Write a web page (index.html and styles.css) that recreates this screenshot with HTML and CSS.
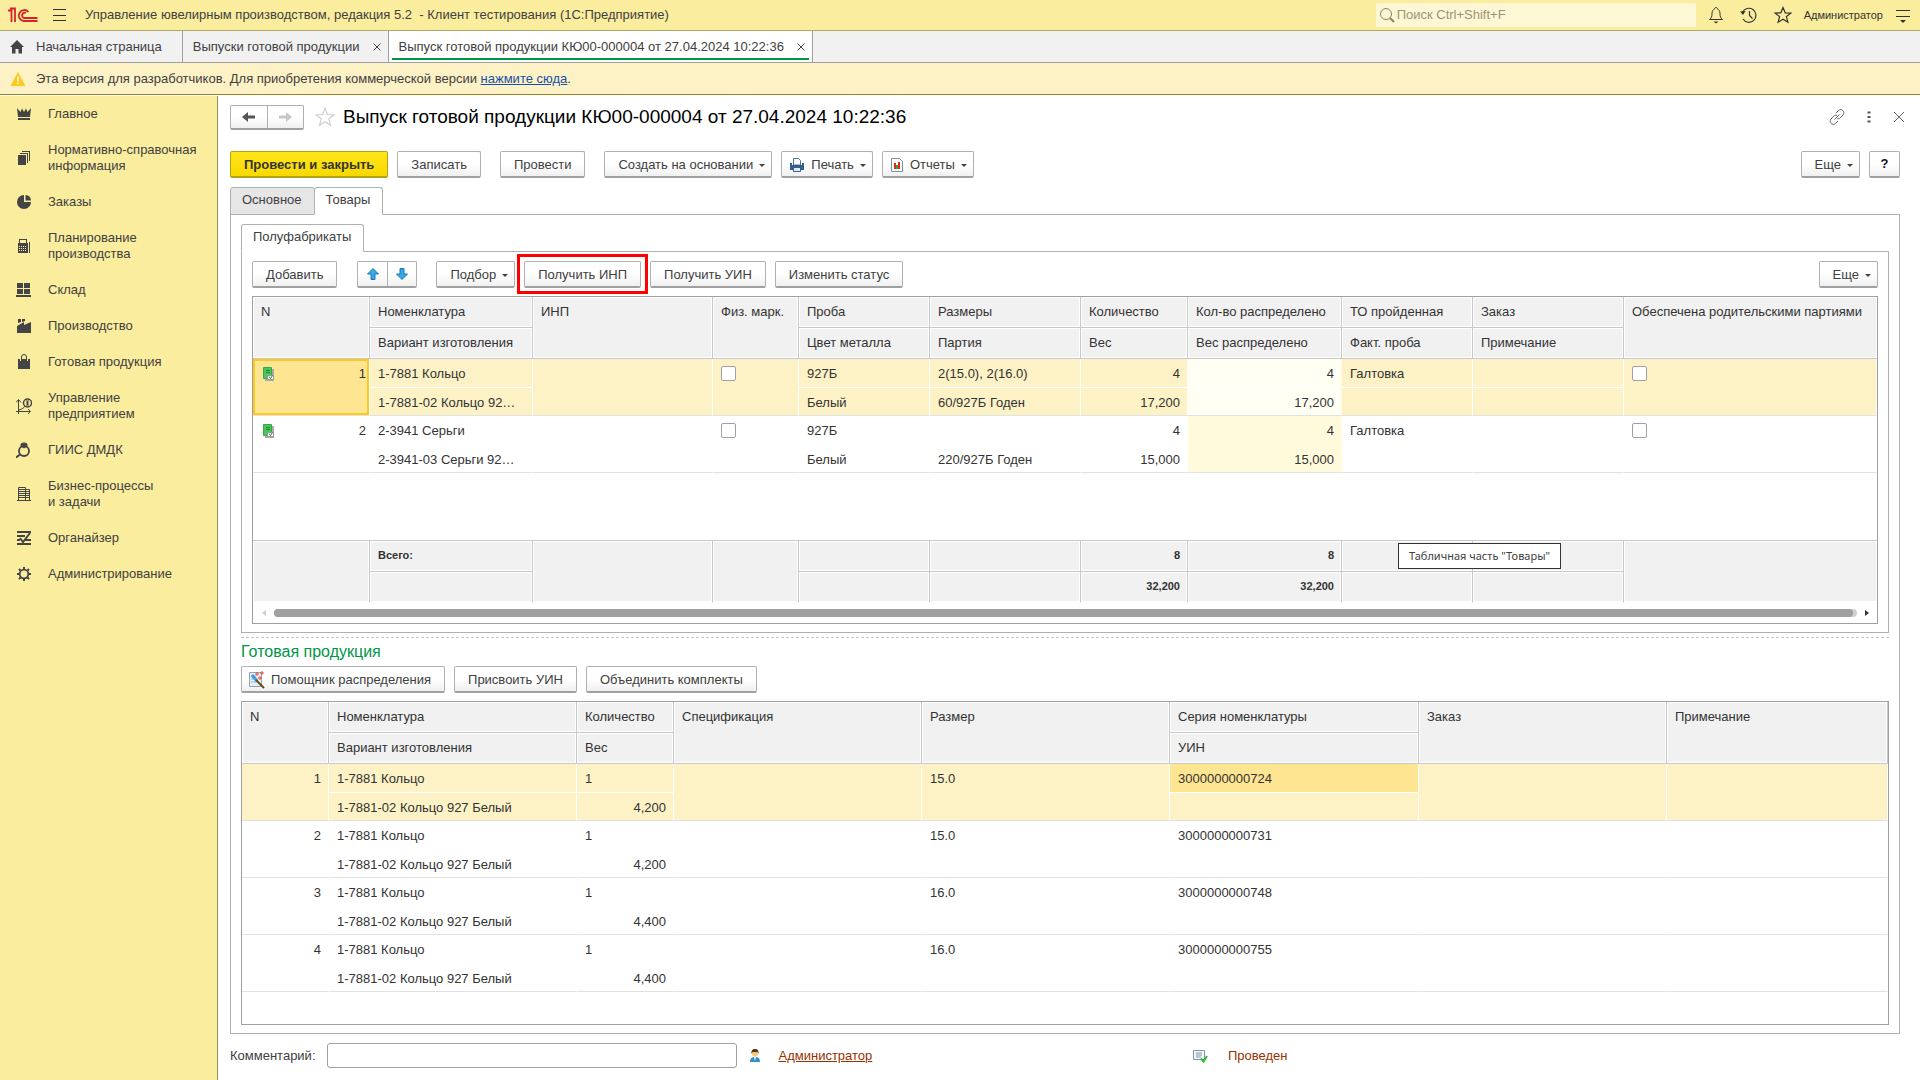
FILE: index.html
```html
<!DOCTYPE html>
<html lang="ru">
<head>
<meta charset="utf-8">
<title>Управление ювелирным производством</title>
<link rel="stylesheet" href="styles.css">
</head>
<body>
<header class="topbar">
  <a class="logo" href="#" aria-label="1С"><svg width="30" height="18" viewBox="0 0 30 18" fill="none" stroke="#d8232a" stroke-width="1.800"><path d="M0 4.500h3.500V16M2 2.500h5V16"/><path d="M20.500 6a5.500 5.500 0 1 0-4.500 9H29.500"/><path d="M18 7a2.700 2.700 0 1 0-2 5H29.500"/></svg></a>
  <button class="ghost" aria-label="Меню"><svg width="16" height="16" viewBox="0 0 16 16" stroke="#333" fill="none"><path d="M1 2.500h13M1 8.500h13M1 13.500h13"/></svg></button>
  <h1 class="app-title">Управление ювелирным производством, редакция 5.2&nbsp; - Клиент тестирования (1С:Предприятие)</h1>
  <label class="search">
    <svg width="16" height="16" viewBox="0 0 16 16" fill="none" stroke="#8d865c"><circle cx="7" cy="7" r="5.500"/><path d="M11 11l4 4" stroke-width="2"/></svg>
    <input type="text" aria-label="Поиск" placeholder="Поиск Ctrl+Shift+F">
  </label>
  <nav class="top-tools">
    <button class="ghost" aria-label="Уведомления"><svg width="16" height="18" viewBox="0 0 16 18" fill="none" stroke="#333"><path d="M1.500 13.500h13c-2-1.500-2.500-3-2.500-6 0-3-1.500-4-2.500-4.500C9.500 1 6.500 1 6.500 3 5.500 3.500 4 4.500 4 7.500c0 3-.5 4.500-2.500 6z"/><path d="M5.500 15.500h5l-2.500 2z" fill="#333" stroke="none"/></svg></button>
    <button class="ghost" aria-label="История"><svg width="18" height="18" viewBox="0 0 18 18" fill="none" stroke="#333" stroke-width="1.200"><path d="M2.500 6.500A7 7 0 1 1 3 13"/><path d="M9.500 5v4.500l3 3"/><path d="M0 5.500l5.500-.5-2.500 4z" fill="#333" stroke="none"/></svg></button>
    <button class="ghost" aria-label="Избранное"><svg width="18" height="18" viewBox="0 0 18 18" fill="none" stroke="#333" stroke-width="1.200"><path d="M9 1.500l2.200 5.300 5.600.3-4.400 3.500 1.500 5.700L9 13.200l-4.900 3.100 1.500-5.700L1.200 7.100l5.600-.3z"/></svg></button>
    <a class="user" href="#">Администратор</a>
    <button class="ghost" aria-label="Настройки"><svg width="16" height="16" viewBox="0 0 16 16" stroke="#333" fill="none"><path d="M1 3.500h14M1 9.500h14"/><path d="M5 13h6l-3 3z" fill="#333" stroke="none"/></svg></button>
  </nav>
</header>

<nav class="windows">
  <a class="window home" href="#"><svg width="14" height="14" viewBox="0 0 14 14" fill="#444"><path d="M7 0l7 7h-2v6.500H8.500V9h-3v4.500H2V7H0z"/></svg>Начальная страница</a>
  <a class="window" href="#">Выпуски готовой продукции<svg width="8" height="8" viewBox="0 0 8 8" stroke="#444"><path d="M.5.5l7 7M7.500.5l-7 7"/></svg></a>
  <a class="window active" href="#">Выпуск готовой продукции КЮ00-000004 от 27.04.2024 10:22:36<svg width="8" height="8" viewBox="0 0 8 8" stroke="#444"><path d="M.5.5l7 7M7.500.5l-7 7"/></svg></a>
</nav>

<div class="notice">
  <svg width="16" height="14" viewBox="0 0 16 14"><path d="M8 0l7.500 14H.5z" fill="#fbc91f"/><path d="M7.300 4.500h1.400v5H7.300zM7.300 10.800h1.400v1.500H7.300z" fill="#fff"/></svg>
  <p>Эта версия для разработчиков. Для приобретения коммерческой версии <a href="#">нажмите сюда</a>.</p>
</div>

<div class="workspace">
  <nav class="sidebar">
    <a href="#"><svg width="16" height="16" viewBox="0 0 16 16" fill="#444"><path d="M1 2l3.500 4L6 2.500 8 6l2-3.500L11.500 6 15 2l-1 9H2zM2 12h12v2H2z"/></svg>Главное</a>
    <a href="#"><svg width="16" height="16" viewBox="0 0 16 16" fill="#444"><path d="M2 5h8v10H2zM4 3h8v10h-1V4H4zM6 1h8v10h-1V2H6z"/></svg>Нормативно-справочная информация</a>
    <a href="#"><svg width="16" height="16" viewBox="0 0 16 16" fill="#444"><path d="M8 1v7h7A7 7 0 1 1 8 1z"/><path d="M9.500 1A6 6 0 0 1 15 6.500H9.500z"/></svg>Заказы</a>
    <a href="#"><svg width="16" height="16" viewBox="0 0 16 16" fill="#444"><path d="M3 1h8v4h1v10H2V5h1zM4 2v3h6V2zM13 4h1v11h-1z" fill-rule="evenodd"/><path d="M3 8.500h8M3 10.500h8M3 12.500h8" stroke="#fbed9e" stroke-dasharray="1 1"/></svg>Планирование производства</a>
    <a href="#"><svg width="16" height="16" viewBox="0 0 16 16" fill="#444"><path d="M1 1h6v5H1zM8 1h6v5H8zM1 7h6v5H1zM8 7h6v5H8zM0 13h15v2H0z"/></svg>Склад</a>
    <a href="#"><svg width="16" height="16" viewBox="0 0 16 16" fill="#444"><path d="M2 1h3v3L2 5zM6 1h3v2L6 4zM1 8l7-4v3l7-3v11H1z"/></svg>Производство</a>
    <a href="#"><svg width="16" height="16" viewBox="0 0 16 16" fill="#444"><path d="M2 5h12v10H2z"/><path d="M5.500 7V3a2.500 2.500 0 0 1 5 0v4" fill="none" stroke="#444"/><path d="M4.500 7V5M11.500 7V5" stroke="#fbed9e"/></svg>Готовая продукция</a>
    <a href="#"><svg width="16" height="16" viewBox="0 0 16 16" fill="none" stroke="#444"><path d="M2.500 2v14M0 13.500h14M0 4.500l2.500-3 2.500 3M12 11l2.500 2.500L12 16M3 12c3-1 5-2 6-4" /><circle cx="11.500" cy="5" r="4" stroke-width="1.500"/><path d="M10 3h3M10 5h3M10 7h3M11.500 3v4"/></svg>Управление предприятием</a>
    <a href="#"><svg width="16" height="16" viewBox="0 0 16 16" fill="none" stroke="#444"><circle cx="8" cy="9" r="5" stroke-width="1.800"/><path d="M5 2l2-1h2l2 1v2L8 6 5 4z" fill="#444"/><path d="M0 15.500l4-3" stroke-width="2"/></svg>ГИИС ДМДК</a>
    <a href="#"><svg width="16" height="16" viewBox="0 0 16 16" fill="none" stroke="#444"><path d="M2.500 15V1.500h7V15M9.500 3.500h4V15M1 14.500h14M3 3.500h6M3 5.500h10M3 7.500h10M3 9.500h10M3 11.500h10"/></svg>Бизнес-процессы<br>и задачи</a>
    <a href="#"><svg width="16" height="16" viewBox="0 0 16 16" fill="none" stroke="#444" stroke-width="2"><path d="M1 2h14M1 6h8M1 10h3M9 10h6M1 14h14"/><path d="M4 8l3 4 7-9"/></svg>Органайзер</a>
    <a href="#"><svg width="16" height="16" viewBox="0 0 16 16" fill="none" stroke="#444"><circle cx="8" cy="8" r="4.300" stroke-width="1.800"/><path d="M8 1v2M8 13v2M1 8h2M13 8h2M3 3l1.500 1.500M11.500 11.500L13 13M13 3l-1.500 1.500M4.500 11.500L3 13" stroke-width="2"/></svg>Администрирование</a>
  </nav>

  <main class="form">
    <div class="form-head">
      <div class="pair nav-pair">
        <button aria-label="Назад"><svg width="14" height="12" viewBox="0 0 14 12" fill="#555"><path d="M0 6l6-5v3.500h7v3H6V11z"/></svg></button>
        <button aria-label="Вперед"><svg width="14" height="12" viewBox="0 0 14 12" fill="#c8c8c8"><path d="M14 6L8 1v3.500H1v3h7V11z"/></svg></button>
      </div>
      <button class="ghost" aria-label="В избранное"><svg width="20" height="20" viewBox="0 0 18 18" fill="none" stroke="#ccc"><path d="M9 1l2.200 5.800 5.800.3-4.600 3.500 1.500 5.900L9 13.200l-4.900 3.300 1.500-5.900L1 7.100l5.800-.3z"/></svg></button>
      <h2 class="form-title">Выпуск готовой продукции КЮ00-000004 от 27.04.2024 10:22:36</h2>
      <div class="head-tools">
        <button class="ghost" aria-label="Ссылка"><svg width="16" height="16" viewBox="0 0 16 16" fill="none" stroke="#666"><path d="M7 4l2.500-2.500c3-2.500 7 1 4.500 4.500l-3 3c-1 1-2 1-3 .5M9 12l-2.500 2.500c-3 2.500-7-1-4.500-4.500l3-3c1-1 2-1 3-.5M5.500 10.500l5-5"/></svg></button>
        <button class="ghost" aria-label="Действия"><svg width="4" height="12" viewBox="0 0 4 12" fill="#555"><path d="M.5.500h3v2h-3zM.5 5h3v2h-3zM.5 9.500h3v2h-3z"/></svg></button>
        <button class="ghost" aria-label="Закрыть"><svg width="12" height="12" viewBox="0 0 12 12" stroke="#666"><path d="M1 1l10 10M11 1L1 11"/></svg></button>
      </div>
    </div>

    <div class="bar main-bar">
      <button class="btn primary">Провести и закрыть</button>
      <button class="btn">Записать</button>
      <button class="btn spaced">Провести</button>
      <button class="btn drop spaced">Создать на основании</button>
      <button class="btn drop with-icon"><svg width="16" height="16" viewBox="0 0 16 16"><path d="M4.500 1.500h5l2 2V8h-7z" fill="#fff" stroke="#4a7299"/><path d="M1 6h2v2h10V6h2v7H1z" fill="#35608a"/><path d="M4.500 10.500h7v4h-7z" fill="#dfeaf4" stroke="#35608a"/></svg>Печать</button>
      <button class="btn drop with-icon"><svg width="14" height="16" viewBox="0 0 14 16"><path d="M1.500 1.500h8l3 3v10h-11z" fill="#fff" stroke="#7d90a5"/><path d="M4 6h2v6H4z" fill="#e02a1c"/><path d="M6 8h2v4H6z" fill="#2ea836"/><path d="M8 5h2v7H8z" fill="#e02a1c"/></svg>Отчеты</button>
      <button class="btn drop push">Еще</button>
      <button class="btn help">?</button>
    </div>

    <div class="tabs"><button class="tab">Основное</button><button class="tab current">Товары</button></div>
    <section class="panel outer">
      <div class="tabs"><button class="tab current">Полуфабрикаты</button></div>
      <section class="panel inner">
        <div class="bar table-bar">
          <button class="btn">Добавить</button>
          <div class="pair move-pair">
            <button aria-label="Вверх"><svg width="12" height="12" viewBox="0 0 12 12"><path d="M6 .5l5.500 5.500H8v5.500H4V6H.5z" fill="#35a8e8" stroke="#1f78b0"/></svg></button>
            <button aria-label="Вниз"><svg width="12" height="12" viewBox="0 0 12 12"><path d="M6 11.500L.5 6H4V.5h4V6h3.500z" fill="#35a8e8" stroke="#1f78b0"/></svg></button>
          </div>
          <button class="btn drop spaced">Подбор</button>
          <button class="btn marked">Получить ИНП</button>
          <button class="btn">Получить УИН</button>
          <button class="btn">Изменить статус</button>
          <button class="btn drop push">Еще</button>
        </div>
        <div class="grid-box">
          <table class="grid goods">
            <colgroup><col class="w-n"><col class="w-name"><col class="w-inp"><col class="w-mark"><col class="w-a"><col class="w-b"><col class="w-qty"><col class="w-dist"><col class="w-a"><col class="w-b"><col></colgroup>
            <thead>
              <tr><th rowspan="2">N</th><th>Номенклатура</th><th rowspan="2">ИНП</th><th rowspan="2">Физ. марк.</th><th>Проба</th><th>Размеры</th><th>Количество</th><th>Кол-во распределено</th><th>ТО пройденная</th><th>Заказ</th><th rowspan="2">Обеспечена родительскими партиями</th></tr>
              <tr><th>Вариант изготовления</th><th>Цвет металла</th><th>Партия</th><th>Вес</th><th>Вес распределено</th><th>Факт. проба</th><th>Примечание</th></tr>
            </thead>
            <tbody class="record selected">
              <tr><td rowspan="2" class="focus"><div class="numbered"><svg width="14" height="16" viewBox="0 0 14 16"><path d="M3 3h9v12H3z" fill="#aaa"/><path d="M1.500 1.500h8v11h-8z" fill="#4cc35c" stroke="#37a948"/><path d="M4 4.500h4M4 6.500h4" stroke="#1f8a30"/><path d="M5.500 9.500h6v4h-6z" fill="#fff" stroke="#999"/><path d="M7 10.500l1.500 2 2-3" stroke="#1f8a30" fill="none"/></svg>1</div></td><td>1-7881 Кольцо</td><td rowspan="2"></td><td rowspan="2"><input type="checkbox" aria-label="Физ. марк., строка 1"></td><td>927Б</td><td>2(15.0), 2(16.0)</td><td class="num">4</td><td class="num dist">4</td><td>Галтовка</td><td></td><td rowspan="2"><input type="checkbox" aria-label="Обеспечена, строка 1"></td></tr>
              <tr><td>1-7881-02 Кольцо 92…</td><td>Белый</td><td>60/927Б Годен</td><td class="num">17,200</td><td class="num dist">17,200</td><td></td><td></td></tr>
            </tbody>
            <tbody class="record">
              <tr><td rowspan="2"><div class="numbered"><svg width="14" height="16" viewBox="0 0 14 16"><path d="M3 3h9v12H3z" fill="#aaa"/><path d="M1.500 1.500h8v11h-8z" fill="#4cc35c" stroke="#37a948"/><path d="M4 4.500h4M4 6.500h4" stroke="#1f8a30"/><path d="M5.500 9.500h6v4h-6z" fill="#fff" stroke="#999"/><path d="M7 10.500l1.500 2 2-3" stroke="#1f8a30" fill="none"/></svg>2</div></td><td>2-3941 Серьги</td><td rowspan="2"></td><td rowspan="2"><input type="checkbox" aria-label="Физ. марк., строка 2"></td><td>927Б</td><td></td><td class="num">4</td><td class="num dist">4</td><td>Галтовка</td><td></td><td rowspan="2"><input type="checkbox" aria-label="Обеспечена, строка 2"></td></tr>
              <tr><td>2-3941-03 Серьги 92…</td><td>Белый</td><td>220/927Б Годен</td><td class="num">15,000</td><td class="num dist">15,000</td><td></td><td></td></tr>
            </tbody>
            <tbody class="filler"><tr><td colspan="11"></td></tr></tbody>
            <tfoot>
              <tr><td rowspan="2"></td><td>Всего:</td><td rowspan="2"></td><td rowspan="2"></td><td></td><td></td><td class="num">8</td><td class="num">8</td><td></td><td></td><td rowspan="2"></td></tr>
              <tr><td></td><td></td><td></td><td class="num">32,200</td><td class="num">32,200</td><td></td><td></td></tr>
            </tfoot>
          </table>
          <div class="scroll">
            <svg width="4" height="8" viewBox="0 0 4 8" fill="#ccc"><path d="M4 1v6L0 4z"/></svg>
            <div class="track"><div class="thumb"></div></div>
            <svg width="4" height="8" viewBox="0 0 4 8" fill="#333"><path d="M0 1v6l4-3z"/></svg>
          </div>
          <div class="tooltip" role="tooltip">Табличная часть "Товары"</div>
        </div>
      </section>

      <h3 class="section-title">Готовая продукция</h3>
      <div class="bar product-bar">
        <button class="btn with-icon"><svg width="16" height="18" viewBox="0 0 16 18"><path d="M.5 1.500h12v14H.5z" fill="#e8eef5" stroke="#8fa3ba"/><path d="M2 5h5M2 8h5M2 11h8" stroke="#9fb3c8"/><path d="M3 4l5 6" stroke="#35a0dc" stroke-width="3"/><path d="M7 9l8 8" stroke="#6b4a14" stroke-width="2"/><path d="M8 1v4M6 3h4M13 0v4M11 2h4M11 5v4M9 7h4" stroke="#ee4a35"/></svg>Помощник распределения</button>
        <button class="btn">Присвоить УИН</button>
        <button class="btn">Объединить комплекты</button>
      </div>
      <div class="grid-box grow">
        <table class="grid product">
          <colgroup><col class="w-no"><col class="w-wide"><col class="w-weight"><col class="w-wide"><col class="w-wide"><col class="w-series"><col class="w-wide"><col></colgroup>
          <thead>
            <tr><th rowspan="2">N</th><th>Номенклатура</th><th>Количество</th><th rowspan="2">Спецификация</th><th rowspan="2">Размер</th><th>Серия номенклатуры</th><th rowspan="2">Заказ</th><th rowspan="2">Примечание</th></tr>
            <tr><th>Вариант изготовления</th><th>Вес</th><th>УИН</th></tr>
          </thead>
          <tbody class="record selected">
            <tr><td rowspan="2" class="num">1</td><td>1-7881 Кольцо</td><td>1</td><td rowspan="2"></td><td rowspan="2">15.0</td><td class="cell-on">3000000000724</td><td rowspan="2"></td><td rowspan="2"></td></tr>
            <tr><td>1-7881-02 Кольцо 927 Белый</td><td class="num">4,200</td><td></td></tr>
          </tbody>
          <tbody class="record">
            <tr><td rowspan="2" class="num">2</td><td>1-7881 Кольцо</td><td>1</td><td rowspan="2"></td><td rowspan="2">15.0</td><td>3000000000731</td><td rowspan="2"></td><td rowspan="2"></td></tr>
            <tr><td>1-7881-02 Кольцо 927 Белый</td><td class="num">4,200</td><td></td></tr>
          </tbody>
          <tbody class="record">
            <tr><td rowspan="2" class="num">3</td><td>1-7881 Кольцо</td><td>1</td><td rowspan="2"></td><td rowspan="2">16.0</td><td>3000000000748</td><td rowspan="2"></td><td rowspan="2"></td></tr>
            <tr><td>1-7881-02 Кольцо 927 Белый</td><td class="num">4,400</td><td></td></tr>
          </tbody>
          <tbody class="record">
            <tr><td rowspan="2" class="num">4</td><td>1-7881 Кольцо</td><td>1</td><td rowspan="2"></td><td rowspan="2">16.0</td><td>3000000000755</td><td rowspan="2"></td><td rowspan="2"></td></tr>
            <tr><td>1-7881-02 Кольцо 927 Белый</td><td class="num">4,400</td><td></td></tr>
          </tbody>
        </table>
      </div>
    </section>

    <footer class="form-foot">
      <div class="comment">
        <label for="comment">Комментарий:</label>
        <input id="comment" type="text">
        <svg width="12" height="14" viewBox="0 0 12 14"><path d="M1 13c0-4 2-5 5-5s5 1 5 5z" fill="#3490c8"/><path d="M5 8h2l-1 4z" fill="#fff"/><circle cx="6" cy="4.500" r="3" fill="#f3c877"/><path d="M2.500 5C2 1 4 0 6 0s4 1 3.500 5L8.500 3h-5z" fill="#4b3620"/></svg>
        <a href="#">Администратор</a>
      </div>
      <div class="state">
        <svg width="16" height="14" viewBox="0 0 16 14"><path d="M1.500 1.500h11v9h-11z" fill="#f2f5f9" stroke="#8794a8"/><path d="M4 4h6M4 6h6M4 8h5" stroke="#8794a8"/><path d="M9 9.500l2.500 3L15 7" fill="none" stroke="#2db83a" stroke-width="2"/></svg>
        <span>Проведен</span>
      </div>
    </footer>
  </main>
</div>
</body>
</html>
```
FILE: styles.css
```css
* { box-sizing: border-box; }

body {
  margin: 0;
  min-height: 100vh;
  display: flex;
  flex-direction: column;
  background: #fff;
  color: #404040;
  font: 13px/16px "Liberation Sans", Arial, sans-serif;
}

h1, h2, h3, p { margin: 0; font-weight: normal; }
button, input { font: inherit; color: inherit; }
a { color: inherit; text-decoration: none; }
svg { flex: none; display: block; }

.ghost {
  display: flex;
  padding: 0;
  border: 0;
  background: none;
}

/* Title bar */
.topbar {
  display: flex;
  align-items: center;
  height: 31px;
  padding: 0 9px 0 8px;
  background: #fbed9e;
  border-bottom: 1px solid #b0a868;
}
.logo { margin-right: 14px; }
.app-title { margin-left: 17px; font-size: 13px; }
.search {
  display: flex;
  align-items: center;
  gap: 2px;
  width: 320px;
  height: 24px;
  margin: 0 12px 0 auto;
  padding-left: 3px;
  background: #fdf7d5;
  border-radius: 2px;
}
.search input {
  flex: 1;
  min-width: 0;
  padding: 0;
  border: 0;
  outline: 0;
  background: none;
}
.search input::placeholder { color: #9b9476; opacity: 1; }
.top-tools { display: flex; align-items: center; gap: 16px; }
.user { margin: 0 -4px; font-size: 11px; color: #333; }

/* Open windows */
.windows {
  display: flex;
  height: 32px;
  background: #f1f1f1;
  border-bottom: 1px solid #a0a0a0;
}
.window {
  display: flex;
  align-items: center;
  gap: 13px;
  padding: 0 7px 0 10px;
  border-right: 1px solid #a0a0a0;
}
.window.home { gap: 12px; padding: 0 20px 0 10px; }
.window.active {
  background: linear-gradient(#009646, #009646) 3px 27px / calc(100% - 6px) 2px no-repeat #fff;
}

.notice {
  display: flex;
  align-items: center;
  gap: 10px;
  height: 32px;
  padding-left: 10px;
  background: #fdf2c6;
  border-bottom: 1px solid #9c8020;
}
.notice a { color: #1a4fa8; text-decoration: underline; }

/* Sections */
.workspace {
  flex: 1;
  display: grid;
  grid-template-columns: 218px 1fr;
  padding-top: 1px;
}
.sidebar { background: #fbed9e; border-right: 1px solid #958c5c; }
.sidebar a {
  display: grid;
  grid-template-columns: 16px 1fr;
  align-items: center;
  gap: 16px;
  padding: 10px 8px 10px 16px;
}

/* Document form */
.form {
  display: flex;
  flex-direction: column;
  min-width: 0;
  padding: 9px 12px 12px;
}
.form-head { display: flex; align-items: center; height: 24px; }
.form-head > .ghost { margin: 0 8px 0 11px; }
.form-title { font-size: 19px; line-height: 24px; color: #000; }
.head-tools { display: flex; align-items: center; gap: 22px; margin-left: auto; padding-right: 3px; }

.btn, .pair {
  border: 1px solid #b0b0b0;
  border-bottom: 2px solid #a0a0a0;
  border-radius: 2px;
  background: linear-gradient(#fff 50%, #f0f0f0);
}
.btn {
  display: flex;
  align-items: center;
  gap: 6px;
  height: 27px;
  padding: 1px 13px 0;
  white-space: nowrap;
}
.btn.primary {
  font-weight: bold;
  color: #333;
  border-color: #b8a010;
  background: linear-gradient(#ffe61a, #f8d800);
}
.btn.with-icon { padding-left: 7px; }
.btn.drop { padding-right: 6px; }
.btn.drop::after {
  content: "";
  border: 3px solid transparent;
  border-top-color: #404040;
  border-bottom: 0;
  margin-top: 2px;
}
.btn.help { width: 31px; justify-content: center; padding: 0; font-weight: bold; color: #111; }
.btn.push { margin-left: auto; }

.pair { display: flex; overflow: hidden; }
.pair button {
  flex: 1;
  display: flex;
  align-items: center;
  justify-content: center;
  padding: 0;
  border: 0;
  background: none;
}
.pair button + button { border-left: 1px solid #b0b0b0; }
.nav-pair { width: 74px; height: 25px; }
.move-pair { width: 60px; height: 27px; margin-left: 11px; }

.bar { display: flex; align-items: center; gap: 9px; }
.bar .spaced { margin-left: 10px; }
.main-bar { margin-top: 22px; }
.form > .bar, .form > .tabs, .form > .outer { margin-right: 8px; }

.tabs { display: flex; align-items: flex-end; margin-bottom: -1px; position: relative; }
.tab {
  height: 28px;
  padding: 0 12px 2px 11px;
  border: 1px solid #b0b0b0;
  border-radius: 3px 3px 0 0;
  background: #e6e6e6;
}
.tab + .tab { margin-left: -1px; }
.tab.current { background: #fff; border-bottom-color: #fff; }
.form > .tabs { margin-top: 9px; }

.panel { border: 1px solid #b0b0b0; }
.outer {
  flex: 1;
  display: flex;
  flex-direction: column;
  padding: 9px 10px 8px;
}
.inner { padding: 9px 10px 8px; }
.marked { position: relative; }
.marked::after {
  content: "";
  position: absolute;
  inset: -8px;
  border: 3px solid #f00;
  pointer-events: none;
}

/* Tables */
.grid-box {
  position: relative;
  margin-top: 8px;
  border: 1px solid #a0a0a0;
}
.grid-box.grow { flex: 1; }
.grid {
  width: 100%;
  table-layout: fixed;
  border-collapse: separate;
  border-spacing: 0;
  color: #333;
}
.w-n { width: 117px; }
.w-name { width: 163px; }
.w-inp { width: 180px; }
.w-mark { width: 86px; }
.w-a { width: 131px; }
.w-b { width: 151px; }
.w-qty { width: 107px; }
.w-dist { width: 154px; }
.w-no { width: 87px; }
.w-wide { width: 248px; }
.w-weight { width: 97px; }
.w-series { width: 249px; }

.grid th, .grid td {
  padding: 7px 7px 0 8px;
  vertical-align: top;
  text-align: left;
  font-weight: normal;
  white-space: nowrap;
  overflow: hidden;
  text-overflow: ellipsis;
}
.grid th, .grid tfoot td {
  height: 31px;
  background: #f1f1f1;
  border: solid #c8c8c8;
  border-width: 0 1px 1px 0;
  box-shadow: inset 0 0 0 1px #fff;
}
.goods th:last-child[rowspan], .goods tfoot td:last-child[rowspan] { border-right: 0; }
.grid tfoot td { padding-top: 6px; font-size: 11px; font-weight: bold; }
.grid tfoot td[rowspan], .grid tfoot tr:last-child td { border-bottom-color: #fff; }
.grid .num { text-align: right; }

.record td { height: 28px; border-right: 1px solid #fff; }
.record tr:first-child td { height: 29px; }
.record td[rowspan], .record tr:last-child td { border-bottom: 1px solid #e2e2e2; }
.selected td { background: #fdf2c6; }
.selected tr:first-child td:not([rowspan]) { border-bottom: 1px solid #fff; }
.record .dist { background: #fffadb; border-right-color: #fffadb; }
.selected .dist { background: #fffff4; }
.selected .cell-on { background: #fee591; }
.selected .focus { background: #fee591; box-shadow: inset 0 0 0 2px #fbc91f; }
.numbered { display: flex; justify-content: space-between; padding-left: 1px; margin-right: -4px; }
.filler td { height: 68px; border-bottom: 1px solid #c8c8c8; }

.grid input[type="checkbox"] {
  appearance: none;
  display: block;
  width: 15px;
  height: 15px;
  margin: 0;
  border: 1px solid #a0a0a0;
  border-radius: 2px;
  background: #fff;
}

.scroll { display: flex; align-items: center; gap: 8px; height: 20px; padding: 0 8px 0 9px; }
.track { flex: 1; height: 8px; border-radius: 4px; background: #d0d0d0; }
.thumb { height: 8px; margin-right: 4px; border-radius: 4px; background: #a0a0a0; }

.tooltip {
  position: absolute;
  right: 316px;
  bottom: 54px;
  padding: 4px 10px;
  border: 1px solid #333;
  background: #fff;
  font-family: "Noto Sans", sans-serif;
  font-size: 11px;
}

.section-title {
  margin-top: 4px;
  padding-top: 4px;
  border-top: 1px dashed #c8c8c8;
  font-size: 16px;
  line-height: 20px;
  color: #009646;
}
.product-bar { margin-top: 4px; }

.form-foot { display: grid; grid-template-columns: 962px 1fr; align-items: center; margin-top: 9px; }
.comment, .state { display: flex; align-items: center; }
.comment input {
  width: 410px;
  height: 25px;
  margin: 0 12px 0 11px;
  border: 1px solid #a0a0a0;
  border-radius: 3px;
}
.comment a { margin-left: 18px; color: #963200; text-decoration: underline; }
.state { gap: 20px; color: #963200; }
```
